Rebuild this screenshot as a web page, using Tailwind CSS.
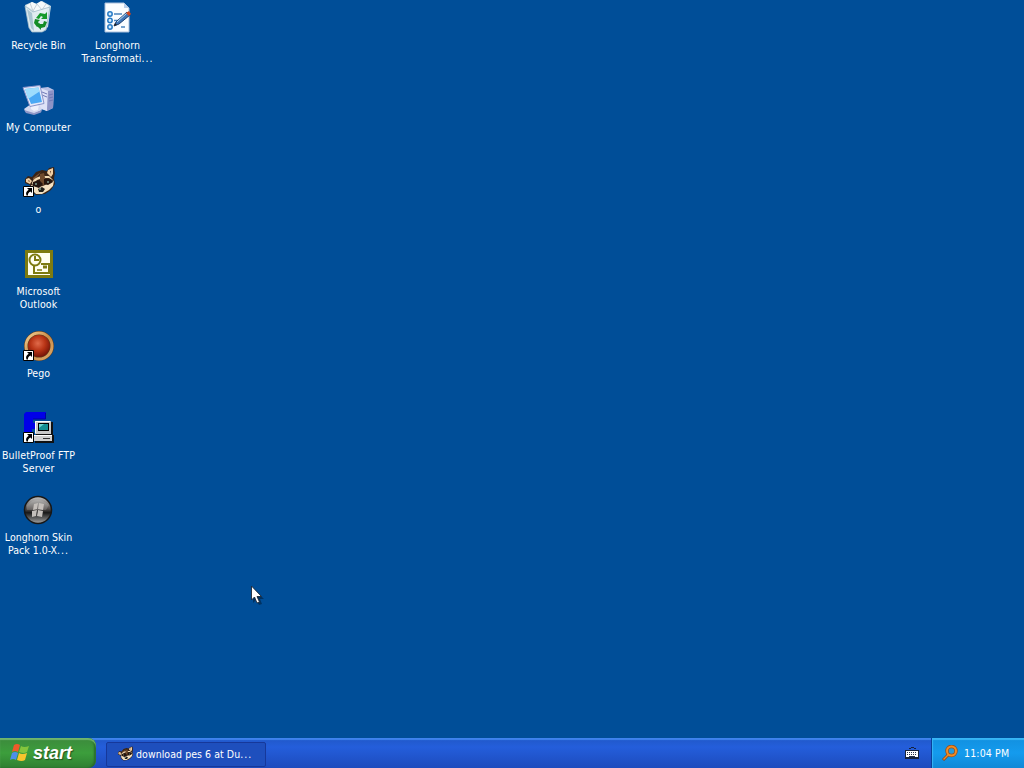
<!DOCTYPE html>
<html lang="en">
<head>
    <meta charset="UTF-8">
    <meta name="viewport" content="width=device-width, initial-scale=1">
    <script src="https://cdn.jsdelivr.net/npm/@tailwindcss/browser@4"></script>
    <title>Desktop</title>
</head>

<body class="h-screen overflow-hidden bg-[#004e98] font-['DejaVu_Sans_Condensed','DejaVu_Sans',sans-serif] text-[10.5px] leading-[13px] text-white select-none">

    <!-- Shared drawings -->
    <svg class="hidden">
        <symbol id="shortcut" viewBox="0 0 11 11">
            <path d="M.5.5h10v10H.5z" fill="#fff" stroke="#000"/>
            <path d="M4 2h5v5L7.500 5.500Q4.500 7 5 9.500H3.500Q2 6 5.700 3.800z" fill="#000"/>
        </symbol>
        <symbol id="raccoon" viewBox="0 0 32 32">
            <path d="M2 13l3-3 4 1 4-5 6-2 5 1 2-3 5-1 1 6-1 5 1 6-4 6-6 4-9 1-5-4-1-6-5-2z" fill="#3a2416"/>
            <path d="M3 13l3-1 3 3-2 3-4-2zM25 4l5-2v6l-2 3-4-4z" fill="#f0cfa4"/>
            <path d="M5 14l2 1-1 1zM27 5l1 0v3z" fill="#69402b"/>
            <path d="M10 12l8-6-4 5-4 4z" fill="#7c5433"/>
            <path d="M9 17q1-5 9-7l8 0 5 5-5-3-6 0-6 2-4 5z" fill="#f2dab3"/>
            <path d="M17 8l4-1 2 9-3 4-3-5z" fill="#704b2d"/>
            <path d="M8 19l7 2 5-1 4-2 7-3-1 5-4 4-7 4-6 0-4-4z" fill="#f4e1c1"/>
            <path d="M10 16l6-2 4 4-4 4-6-2zM21 13l6 0 3 3-5 3-4-1z" fill="#24150f"/>
            <path d="M15 23l4-2 3 2-2 3-4 0z" fill="#20201c"/>
            <path d="M12 18h2M24 16h2M16 23h2" stroke="#a8ddcf"/>
        </symbol>
    </svg>

    <div class="flex h-full flex-col">
        <!-- DESKTOP ICONS -->
        <main class="flex grow gap-[2px] text-center">
            <div class="flex w-[77px] flex-col whitespace-nowrap">
                <div class="flex h-[82px] flex-col items-center pt-[1px]">
                    <svg class="mr-[2px] mb-[6px] size-8 shrink-0" viewBox="0 0 32 32">
                        <path d="M3 4l7-3 5 2 5-3 9 5-3 21-6 5H10l-3-5z" fill="#cddfe6"/>
                        <path d="M4 5l6-4 4 2 5-3 8 5-4 7-9-1z" fill="#f6fafb"/>
                        <path d="M8 2l3 8 4-7 5 6 4-6" fill="none" stroke="#c7d0d8"/>
                        <path d="M3 5l8 6 17-5-4 23-4 2H10l-3-4z" fill="#e4eff3" fill-opacity=".82" stroke="#9fbac9" stroke-width=".8"/>
                        <path d="M5 8l4 19 3 3-2-18z" fill="#a9c5d2"/>
                        <path d="M14 17l4-5 5 1 2-2v7h-6l2-2-2-1-2 3z" fill="#169a2b"/>
                        <path d="M13 18l5 1-2 2 2 3-3 2-3-4zM18 23h3l1-3 3 1-2 5-4 1v2l-4-4 3-3z" fill="#128c25"/>
                    </svg>
                    <span>Recycle Bin</span>
                </div>
                <div class="flex h-[82px] flex-col items-center pt-[1px]">
                    <svg class="mr-[2px] mb-[6px] size-8 shrink-0" viewBox="0 0 32 32">
                        <path d="M18 5l8-1 6 3-1 18-6 3-8-3z" fill="#b8bfe4"/>
                        <path d="M18 5l8 3-1 20-8-3z" fill="#dfe2f7"/>
                        <path d="M26 8l6-1-1 18-6 3z" fill="#8d93c6"/>
                        <path d="M20 9l5 2M20 12l5 2M27 12l4-1M27 15l4-1M27 18l4-1" stroke="#7079b5"/>
                        <path d="M2 26l7-5 9 2 2 4-8 4-8-2z" fill="#d3d8ef"/>
                        <path d="M2 27l10 3 8-3-1 2.500-7 2.500L4 30z" fill="#8f97c7"/>
                        <path d="M9 20l8 2-1 5-4 1-3-2z" fill="#eef0fb"/>
                        <path d="M1 4.500l17-2 4 18-14 3z" fill="#e7eafa" stroke="#8994ca"/>
                        <path d="M3 6L16.500 4.500 20 19 9 21z" fill="#4ba9f4"/>
                        <path d="M3 6l13.500-1.500 1 4L6 16z" fill="#9eddfd"/>
                    </svg>
                    <span class="tracking-[0.1px]">My Computer</span>
                </div>
                <div class="flex h-[82px] flex-col items-center pt-[1px]">
                    <svg class="mb-[6px] size-8 shrink-0" viewBox="0 0 32 32">
                        <use href="#raccoon" y="1" width="32" height="32"/>
                        <use href="#shortcut" y="21" width="11" height="11"/>
                    </svg>
                    <span>o</span>
                </div>
                <div class="flex h-[82px] flex-col items-center pt-[1px]">
                    <svg class="mb-[6px] size-8 shrink-0" viewBox="0 0 32 32">
                        <path d="M2 3h28v28H2z" fill="#7d7b10"/>
                        <path d="M5 6h22v22H5z" fill="#fffff0"/>
                        <g fill="none" stroke="#7d7b10" stroke-width="2">
                            <path d="M18 17h8v9H11v-7"/>
                            <circle cx="12" cy="13" r="5.500" fill="#fffff0"/>
                            <path d="M12 9v4h4"/>
                            <path d="M14 23h5" stroke-width="1.500"/>
                        </g>
                        <path d="M20 18.500h4v3h-4z" fill="#7d7b10"/>
                    </svg>
                    <span class="tracking-[0.1px]">Microsoft<br>Outlook</span>
                </div>
                <div class="flex h-[82px] flex-col items-center pt-[1px]">
                    <svg class="mb-[6px] size-8 shrink-0" viewBox="0 0 32 32">
                        <defs>
                            <radialGradient id="ball" cx=".45" cy=".38" r=".65">
                                <stop stop-color="#e06a4a"/>
                                <stop offset=".5" stop-color="#b93516"/>
                                <stop offset="1" stop-color="#701207"/>
                            </radialGradient>
                            <linearGradient id="ring" x1="0" y1="0" x2="1" y2="1">
                                <stop stop-color="#f3cf91"/>
                                <stop offset=".5" stop-color="#c98b48"/>
                                <stop offset="1" stop-color="#dda868"/>
                            </linearGradient>
                        </defs>
                        <circle cx="16" cy="17" r="15" fill="#5d3c1c"/>
                        <circle cx="16" cy="17" r="13" fill="none" stroke="url(#ring)" stroke-width="3"/>
                        <circle cx="16" cy="17" r="11" fill="url(#ball)"/>
                        <use href="#shortcut" y="21" width="11" height="11"/>
                    </svg>
                    <span>Pego</span>
                </div>
                <div class="flex h-[82px] flex-col items-center pt-[1px]">
                    <svg class="mb-[6px] size-8 shrink-0" viewBox="0 0 32 32">
                        <path d="M3 1h20v7H10v4h9v6H9v13H1V3z" fill="#0000e8"/>
                        <path d="M22.500 2v6H10" fill="none" stroke="#0000a0"/>
                        <path d="M13 11h17v13h1v8H12v-8h1z" fill="#111"/>
                        <path d="M12 10h16v13H12z" fill="#c9c9c9"/>
                        <path d="M12.500 22V10.500H27" fill="none" stroke="#fff"/>
                        <path d="M15 12h11v8H15z" fill="#000"/>
                        <path d="M16 13h9v6h-9z" fill="#148f93"/>
                        <path d="M16 13h5l-5 4z" fill="#6dd5d0"/>
                        <path d="M11 24h18v6H11z" fill="#cfcfcf"/>
                        <path d="M11 24.500h18" stroke="#fff"/>
                        <path d="M20 27.500h7" stroke="#333"/>
                        <use href="#shortcut" y="21" width="11" height="11"/>
                    </svg>
                    <span class="tracking-[0.15px]">BulletProof FTP<br>Server</span>
                </div>
                <div class="flex h-[82px] flex-col items-center pt-[1px]">
                    <svg class="mr-[1px] mb-[6px] size-8 shrink-0" viewBox="0 0 32 32">
                        <defs>
                            <linearGradient id="orb" x1="0" y1="0" x2="0" y2="1">
                                <stop stop-color="#c5c5c5"/>
                                <stop offset=".45" stop-color="#55504e"/>
                                <stop offset=".6" stop-color="#181818"/>
                                <stop offset="1" stop-color="#a5a5a5"/>
                            </linearGradient>
                        </defs>
                        <circle cx="16" cy="17" r="13.500" fill="url(#orb)" stroke="#171717" stroke-width="1.500"/>
                        <path d="M5 12q10-10 22 0l-3 5H5z" fill="#ddd" fill-opacity=".2"/>
                        <path d="M12 11l4-1-1 6-4 1zM17 10l5 1-1 6-5-1zM10 18l5-1-1 6-4 1zM16 17l5 1-1 6-5-1z" fill="#c4bfbb"/>
                    </svg>
                    <span>Longhorn Skin<br>Pack 1.0-X<span class="tracking-[1px]">...</span></span>
                </div>
            </div>

            <div class="flex w-[77px] flex-col items-center whitespace-nowrap pt-[1px]">
                <svg class="mr-[1px] mb-[6px] size-8 shrink-0" viewBox="0 0 32 32">
                    <path d="M4 2h19l5 5v24H4z" fill="#fbfdff" stroke="#a9bfdc"/>
                    <path d="M23 2v5h5z" fill="#b9cfea"/>
                    <g fill="#d5ecff" stroke="#267ac5" stroke-width="1.500">
                        <circle cx="9" cy="13" r="2.200"/>
                        <circle cx="9" cy="19.500" r="2.200"/>
                        <circle cx="9" cy="26" r="2.200"/>
                    </g>
                    <path d="M13 13h8M13 19.500h4M20 26h4" stroke="#4a83bd" stroke-width="1.500"/>
                    <path d="M13 25l2-4L26 11l3 3-11 9z" fill="#3f75b7" stroke="#1c3f70"/>
                    <path d="M16 21l10-9" stroke="#b7dbf5"/>
                    <path d="M25 12l3-2 2 3-2 2z" fill="#d2471f"/>
                    <path d="M13 25l1-3 2 2z" fill="#222"/>
                </svg>
                <span class="tracking-[0.1px]">Longhorn<br>Transformati<span class="tracking-[1px]">...</span></span>
            </div>
        </main>

        <!-- TASKBAR -->
        <footer class="flex h-[30px] shrink-0 bg-linear-to-b from-[#2058c8] via-[#245edb] via-30% to-[#1d4bbd] shadow-[inset_0_2px_1px_#3f83ee]">
            <button class="flex w-24 items-center gap-[4px] rounded-r-lg bg-linear-to-b from-[#3c8a3c] via-[#3c9e3c] to-[#2f7f31] pl-[10px] shadow-[inset_0_2px_1px_#6fb56d,inset_-2px_0_2px_#27692c]">
                <svg class="h-5 w-[19px]" viewBox="0 0 19 20">
                    <path d="M4 2q3-2 6 0L8 9Q5 7 2 9z" fill="#ee5a2a"/>
                    <path d="M11 3q3 2 8 0l-2 6q-3 2-8 0z" fill="#83c53d"/>
                    <path d="M2 10q3-2 6 0l-2 7q-3-2-6 0z" fill="#4c8fe8"/>
                    <path d="M9 10q3 2 8 0l-2 7q-3 2-8 0z" fill="#f8c52d"/>
                </svg>
                <span class="font-['Liberation_Sans',sans-serif] text-[18px] font-bold italic [text-shadow:1px_1px_1px_#23511f]">start</span>
            </button>

            <div class="ml-[10px] flex w-[160px] items-center">
                <div class="mt-[2px] flex h-[25px] w-full items-center rounded-[2px] border border-[#16389a] bg-[#1e4fbd] pl-[10px]">
                    <svg class="mr-[3px] size-4"><use href="#raccoon" width="16" height="16"/></svg>
                    <span class="whitespace-nowrap tracking-[0.05px]">download pes 6 at Du<span class="tracking-[1px]">...</span></span>
                </div>
            </div>

            <!-- Language bar -->
            <svg class="mt-[7px] ml-auto h-4 w-[14px]" viewBox="0 0 14 16">
                <path d="M4 3.500h2M6 2.500h3M9 3.500h2" fill="none" stroke="#15223c"/>
                <path d="M0 5h14v9H0z" fill="#17233b"/>
                <path d="M1 6h12v6H1z" fill="#fff"/>
                <path d="M2 7.500h10M2 9.500h10" stroke="#26324a" stroke-dasharray="1 1"/>
                <path d="M4 11.500h6" stroke="#26324a"/>
            </svg>

            <!-- Tray -->
            <div class="ml-3 flex w-[93px] items-center border-l border-[#0a3f99] bg-linear-to-b from-[#1290e0] via-[#149bee] to-[#1188d6] pl-[10px] shadow-[inset_1px_2px_1px_#38b6f5]">
                <svg class="mr-[6px] size-4" viewBox="0 0 16 16">
                    <path d="M7 9l-6 6" stroke="#8b461b" stroke-width="3"/>
                    <circle cx="9.500" cy="6" r="4.500" fill="#249bdc" stroke="#95511f" stroke-width="3.500"/>
                    <circle cx="9.500" cy="6" r="4.500" fill="none" stroke="#f28b24" stroke-width="2"/>
                    <path d="M6.500 9.500l-5 5" stroke="#f28b24" stroke-width="1.500"/>
                </svg>
                <span class="whitespace-nowrap tracking-[0.15px]">11:04 PM</span>
            </div>
        </footer>
    </div>

    <!-- Mouse pointer -->
    <svg class="absolute top-[585px] left-[250px] h-5 w-[14px]" viewBox="0 0 14 20">
        <path d="M3 3v15l3-3 3 5 3-1-2-5h4z" fill="#000" fill-opacity=".35"/>
        <path d="M1.500 1v14l3-3 2.500 6 2.500-1L7 11.500h4.500z" fill="#fff" stroke="#1c2838" stroke-width=".9"/>
    </svg>
</body>
</html>
